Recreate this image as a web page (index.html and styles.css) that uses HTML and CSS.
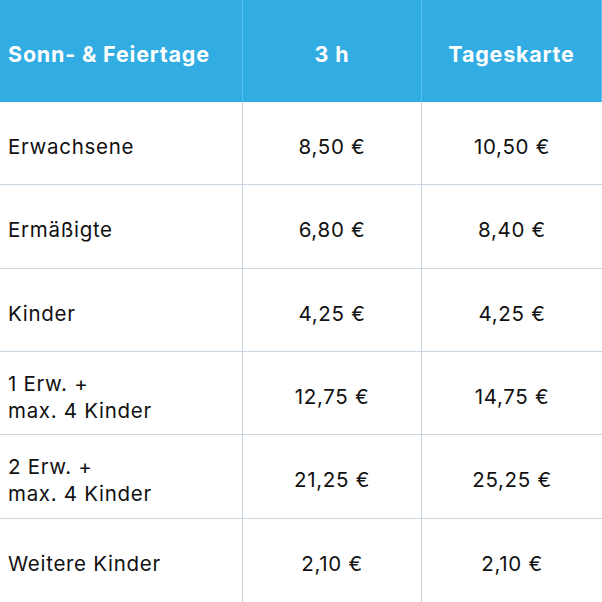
FILE: index.html
```html
<!DOCTYPE html>
<html lang="de">
<head>
<meta charset="utf-8">
<link rel="stylesheet" href="styles.css">
</head>
<body>
<div class="table">
  <div class="cell head first">Sonn- &amp; Feiertage</div>
  <div class="cell head">3 h</div>
  <div class="cell head last">Tageskarte</div>

  <div class="cell first">Erwachsene</div>
  <div class="cell">8,50 €</div>
  <div class="cell last">10,50 €</div>

  <div class="cell first">Ermäßigte</div>
  <div class="cell">6,80 €</div>
  <div class="cell last">8,40 €</div>

  <div class="cell first">Kinder</div>
  <div class="cell">4,25 €</div>
  <div class="cell last">4,25 €</div>

  <div class="cell first">1 Erw. +<br>max. 4 Kinder</div>
  <div class="cell">12,75 €</div>
  <div class="cell last">14,75 €</div>

  <div class="cell first">2 Erw. +<br>max. 4 Kinder</div>
  <div class="cell">21,25 €</div>
  <div class="cell last">25,25 €</div>

  <div class="cell first bottom">Weitere Kinder</div>
  <div class="cell bottom">2,10 €</div>
  <div class="cell last bottom">2,10 €</div>
</div>
</body>
</html>
```
FILE: styles.css
```css
html, body {
  margin: 0;
  padding: 0;
  background: #ffffff;
}
body {
  font-family: "Inter", "Roboto", sans-serif;
  color: #111111;
}
.table {
  display: grid;
  grid-template-columns: 243px 179px 180px;
  grid-template-rows: 102px repeat(6, 1fr);
  width: 602px;
  height: 602px;
}
.cell {
  display: flex;
  align-items: center;
  justify-content: center;
  font-size: 20.5px;
  line-height: 27px;
  letter-spacing: 0.7px;
  border-right: 1px solid #c9d6e2;
  border-bottom: 1px solid #c9d6e2;
  padding-top: 7px;
}
.cell.first {
  justify-content: flex-start;
  padding-left: 8px;
}
.cell.last {
  border-right: none;
}
.cell.bottom {
  border-bottom: none;
}
.cell.head {
  background: #31ade3;
  color: #ffffff;
  font-weight: 700;
  font-size: 21.5px;
  letter-spacing: 0.8px;
  border-right: 1px solid #5cbfe9;
  border-bottom: none;
  padding-top: 6px;
}
.cell.head.last {
  border-right: 1px solid #5cbfe9;
}
```
